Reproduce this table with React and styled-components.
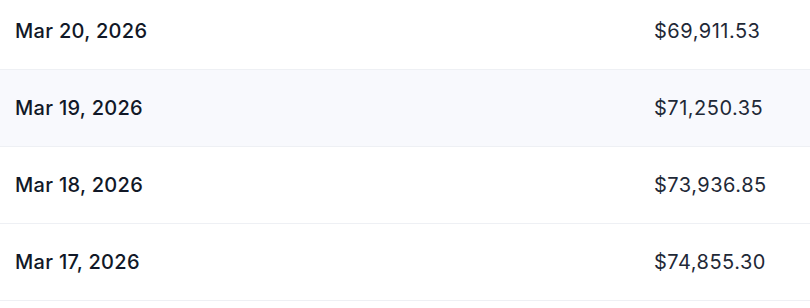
import React from 'react'
import styled, { createGlobalStyle } from 'styled-components'

const GlobalStyle = createGlobalStyle`
  html, body {
    margin: 0;
    padding: 0;
    background: #ffffff;
    overflow: hidden;
  }
  body {
    font-family: Inter, "Noto Sans", sans-serif;
    -webkit-font-smoothing: antialiased;
  }
`;

const Table = styled.div`
  width: 810px;
  margin-top: -7px;
  display: flex;
  flex-direction: column;
`;

const Row = styled.div`
  display: grid;
  grid-template-columns: 1fr 156px;
  align-items: center;
  height: 76px;
  border-bottom: 1px solid #eef0f4;
  background: ${p => (p.$highlight ? '#f8f9fd' : '#ffffff')};
`;

const DateCell = styled.div`
  padding-left: 15px;
  font-size: 20px;
  font-weight: 500;
  letter-spacing: 0.3px;
  color: #111827;
`;

const PriceCell = styled.div`
  font-size: 20px;
  font-weight: 400;
  letter-spacing: 0.5px;
  color: #1f2937;
`;

const rows = [
  { date: 'Mar 20, 2026', price: '$69,911.53' },
  { date: 'Mar 19, 2026', price: '$71,250.35' },
  { date: 'Mar 18, 2026', price: '$73,936.85' },
  { date: 'Mar 17, 2026', price: '$74,855.30' },
];

const App = () => {
  return (
    <>
      <GlobalStyle />
      <Table>
        {rows.map((r, i) => (
          <Row key={r.date} $highlight={i === 1}>
            <DateCell>{r.date}</DateCell>
            <PriceCell>{r.price}</PriceCell>
          </Row>
        ))}
      </Table>
    </>
  )
}

export default App
